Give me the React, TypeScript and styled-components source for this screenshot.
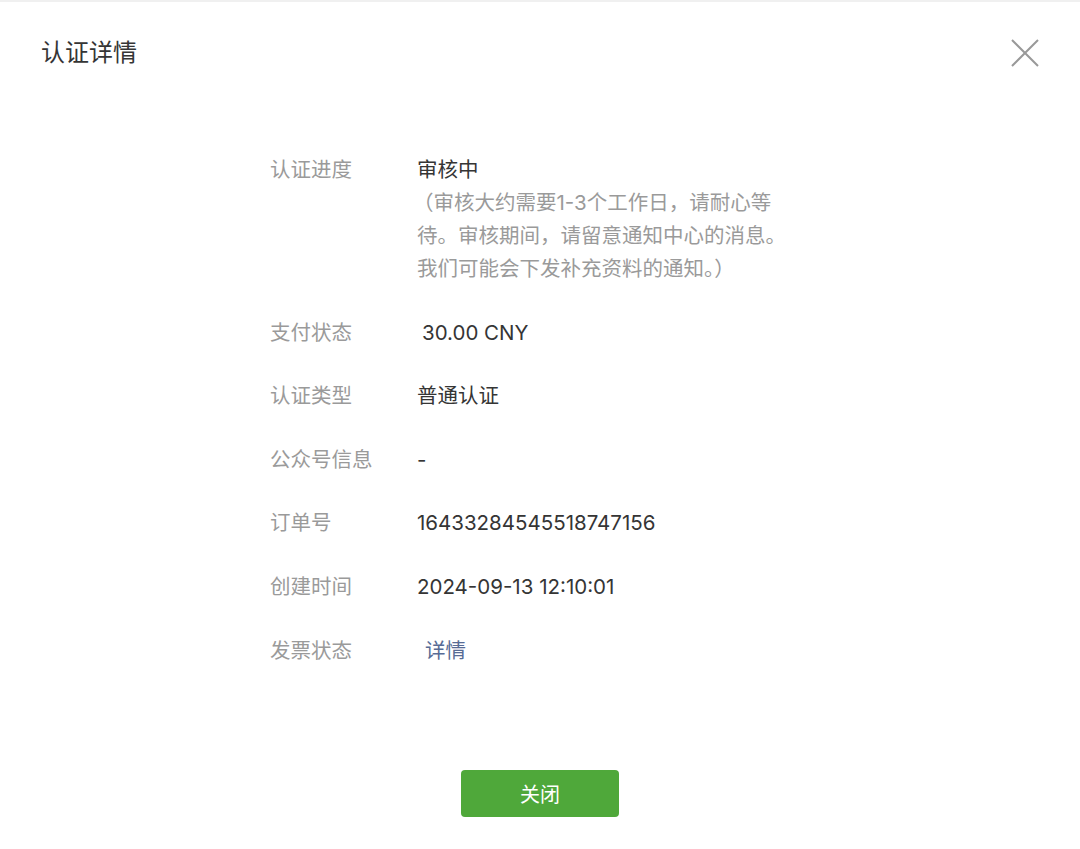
import React from 'react';
import styled, { createGlobalStyle } from 'styled-components';

const GlobalStyle = createGlobalStyle`
    * {
        box-sizing: border-box;
    }
    body {
        margin: 0;
        background: #ffffff;
        font-family: 'Inter', 'Noto Sans CJK SC', sans-serif;
        -webkit-font-smoothing: antialiased;
    }
`;

const Dialog = styled.div`
    display: flex;
    flex-direction: column;
    min-height: 849px;
    border-top: 2px solid #f0f0f0;
    background: #ffffff;
`;

const Header = styled.header`
    display: flex;
    align-items: center;
    justify-content: space-between;
    padding: 34px 40px 0 41px;
`;

const Title = styled.h1`
    margin: 0;
    font-size: 24px;
    font-weight: 400;
    line-height: 34px;
    color: #353535;
`;

const CloseButton = styled.button`
    display: flex;
    align-items: center;
    justify-content: center;
    width: 30px;
    height: 30px;
    padding: 0;
    border: none;
    background: transparent;
    cursor: pointer;
`;

const Body = styled.main`
    display: flex;
    justify-content: center;
    padding-top: 83px;
`;

const DetailList = styled.dl`
    display: flex;
    flex-direction: column;
    gap: 30.6px;
    width: 540px;
    margin: 0;
`;

const Row = styled.div`
    display: grid;
    grid-template-columns: 147px 1fr;
    font-size: 20.5px;
    line-height: 33px;
`;

const Label = styled.dt`
    margin: 0;
    color: #9a9a9a;
`;

const Value = styled.dd<{ $tone?: 'default' | 'link'; $indent?: number }>`
    margin: 0;
    max-width: 374px;
    padding-left: ${(p) => p.$indent ?? 0}px;
    color: ${(p) => (p.$tone === 'link' ? '#576b95' : '#353535')};
    cursor: ${(p) => (p.$tone === 'link' ? 'pointer' : 'default')};
`;

const Note = styled.div`
    color: #9a9a9a;
    text-indent: -4px;
`;

const Footer = styled.footer`
    display: flex;
    justify-content: center;
    padding: 103px 0 32px;
`;

const PrimaryButton = styled.button`
    width: 158px;
    height: 47px;
    border: none;
    border-radius: 4px;
    background: #4fa83a;
    color: #ffffff;
    font-family: inherit;
    font-size: 20px;
    cursor: pointer;
`;

const CloseIcon = () => (
    <svg width="28" height="28" viewBox="0 0 28 28" fill="none">
        <path d="M1 1 L27 27 M27 1 L1 27" stroke="#999999" strokeWidth="2" />
    </svg>
);

type Detail = {
    label: string;
    value: string;
    tone?: 'default' | 'link';
    indent?: number;
};

const details: Detail[] = [
    { label: '支付状态', value: '30.00 CNY', indent: 5 },
    { label: '认证类型', value: '普通认证' },
    { label: '公众号信息', value: '-' },
    { label: '订单号', value: '16433284545518747156' },
    { label: '创建时间', value: '2024-09-13 12:10:01' },
    { label: '发票状态', value: '详情', tone: 'link', indent: 8 },
];

export default function App() {
    return (
        <>
            <GlobalStyle />
            <Dialog>
                <Header>
                    <Title>认证详情</Title>
                    <CloseButton aria-label="关闭">
                        <CloseIcon />
                    </CloseButton>
                </Header>
                <Body>
                    <DetailList>
                        <Row>
                            <Label>认证进度</Label>
                            <Value>
                                审核中
                                <Note>（审核大约需要1-3个工作日，请耐心等待。审核期间，请留意通知中心的消息。我们可能会下发补充资料的通知。）</Note>
                            </Value>
                        </Row>
                        {details.map((d) => (
                            <Row key={d.label}>
                                <Label>{d.label}</Label>
                                <Value $tone={d.tone} $indent={d.indent}>
                                    {d.value}
                                </Value>
                            </Row>
                        ))}
                    </DetailList>
                </Body>
                <Footer>
                    <PrimaryButton>关闭</PrimaryButton>
                </Footer>
            </Dialog>
        </>
    );
}
